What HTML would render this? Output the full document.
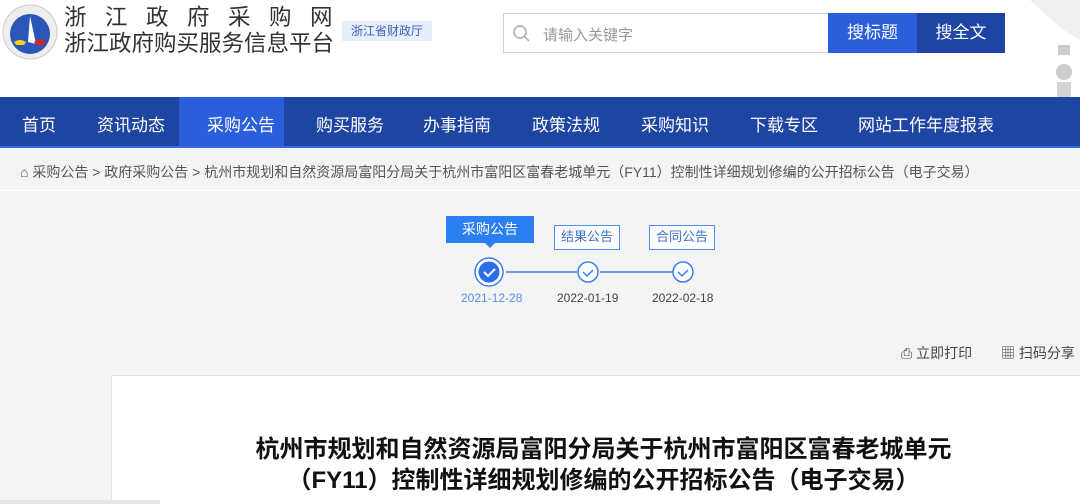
<!DOCTYPE html>
<html><head><meta charset="utf-8"><style>
*{margin:0;padding:0;box-sizing:border-box}
body{width:1080px;height:504px;overflow:hidden;background:#f4f4f4;font-family:"Liberation Sans","Noto Sans CJK SC",sans-serif;position:relative}
.hdr{position:absolute;left:0;top:0;width:1080px;height:97px;background:#fff}
.abs{position:absolute;white-space:nowrap}
.nav{position:absolute;left:0;top:97px;width:1080px;height:51px;background:#1f45a3;border-bottom:2px solid #3a6ad8}
.nav span{position:absolute;top:14px;color:#fff;font-size:17px}
</style></head><body>
<div class="hdr">
<svg class="abs" style="left:2px;top:4px" width="56" height="56" viewBox="0 0 56 56"><circle cx="28" cy="28" r="27" fill="#eee" stroke="#ccc"/><circle cx="28" cy="30" r="20" fill="#2a56b8"/><path d="M28 12 L34 40 L26 38Z" fill="#fff"/><path d="M12 38 q6-4 12 0 l-2 3 h-8z" fill="#f2d11a"/><path d="M32 38 q6-5 12 0 l-2 3 h-8z" fill="#d8202a"/></svg>
<div class="abs" style="left:64px;top:4px;font-size:22.5px;letter-spacing:18.5px;color:#333;line-height:28px">浙江政府采购网</div>
<div class="abs" style="left:64px;top:30px;font-size:22.5px;color:#333;line-height:28px">浙江政府购买服务信息平台</div>
<div class="abs" style="left:342px;top:21px;width:90px;height:20px;background:#e6eefb;color:#3d5fb8;font-size:12px;text-align:center;line-height:20px">浙江省财政厅</div>
<div class="abs" style="left:503px;top:13px;width:326px;height:40px;border:1px solid #c8d2e8;background:#fff"></div>
<svg class="abs" style="left:512px;top:24px" width="20" height="20" viewBox="0 0 20 20"><circle cx="8" cy="8" r="6" fill="none" stroke="#aaa" stroke-width="1.5"/><path d="M12.5 12.5 L17 17" stroke="#aaa" stroke-width="1.5"/></svg>
<div class="abs" style="left:543px;top:24px;font-size:15px;color:#999">请输入关键字</div>
<div class="abs" style="left:828px;top:13px;width:89px;height:40px;background:#2a5fd9;color:#fff;font-size:17px;text-align:center;line-height:40px">搜标题</div>
<div class="abs" style="left:917px;top:13px;width:88px;height:40px;background:#1e44a4;color:#fff;font-size:17px;text-align:center;line-height:40px">搜全文</div>
<svg class="abs" style="left:1000px;top:0" width="80" height="97"><path d="M30 0 Q60 30 80 40 V0z" fill="#f0f0f0"/><rect x="58" y="45" width="12" height="10" fill="#ccc"/><circle cx="64" cy="72" r="8" fill="#ccc"/><rect x="57" y="82" width="14" height="15" fill="#d4d4d4"/></svg>
</div>
<div class="nav">
<div class="abs" style="left:179px;top:0;width:105px;height:49px;background:#2b5edb"></div>
<span style="left:22px">首页</span><span style="left:97px">资讯动态</span><span style="left:207px">采购公告</span><span style="left:316px">购买服务</span><span style="left:423px">办事指南</span><span style="left:532px">政策法规</span><span style="left:641px">采购知识</span><span style="left:750px">下载专区</span><span style="left:858px">网站工作年度报表</span>
</div>
<div class="abs" style="left:20px;top:162px;font-size:14px;color:#555">⌂ 采购公告 &gt; 政府采购公告 &gt; 杭州市规划和自然资源局富阳分局关于杭州市富阳区富春老城单元（FY11）控制性详细规划修编的公开招标公告（电子交易）</div>
<div class="abs" style="left:0;top:190px;width:1080px;height:1px;background:#fff"></div>
<div class="abs" style="left:446px;top:216px;width:88px;height:27px;background:#2b7ff0;color:#fff;font-size:14px;text-align:center;line-height:27px">采购公告</div>
<div class="abs" style="left:484px;top:242px;border:6px solid transparent;border-top-color:#2b7ff0;border-bottom:0"></div>
<div class="abs" style="left:554px;top:225px;width:66px;height:25px;border:1.5px solid #4d8ef0;background:#fff;color:#4070c8;font-size:13px;text-align:center;line-height:22px">结果公告</div>
<div class="abs" style="left:649px;top:225px;width:66px;height:25px;border:1.5px solid #4d8ef0;background:#fff;color:#4070c8;font-size:13px;text-align:center;line-height:22px">合同公告</div>
<svg class="abs" style="left:470px;top:255px" width="230" height="36"><line x1="36" y1="17" x2="107" y2="17" stroke="#3b7ef0" stroke-width="1.5"/><line x1="130" y1="17" x2="203" y2="17" stroke="#3b7ef0" stroke-width="1.5"/><circle cx="19" cy="17" r="14" fill="#fff" stroke="#3b7ef0" stroke-width="1.5"/><circle cx="19" cy="17" r="10.5" fill="#2b6ee8"/><path d="M14 17l4 4 7-7" fill="none" stroke="#fff" stroke-width="2"/><circle cx="118" cy="17" r="10" fill="#fff" stroke="#3b7ef0" stroke-width="1.5"/><path d="M113 17l4 4 6-6" fill="none" stroke="#3b7ef0" stroke-width="1.5"/><circle cx="213" cy="17" r="10" fill="#fff" stroke="#3b7ef0" stroke-width="1.5"/><path d="M208 17l4 4 6-6" fill="none" stroke="#3b7ef0" stroke-width="1.5"/></svg>
<div class="abs" style="left:461px;top:291px;font-size:12px;color:#5b8ee8">2021-12-28</div>
<div class="abs" style="left:557px;top:291px;font-size:12px;color:#444">2022-01-19</div>
<div class="abs" style="left:652px;top:291px;font-size:12px;color:#444">2022-02-18</div>
<div class="abs" style="left:901px;top:343px;font-size:14px;color:#444">⎙ 立即打印</div>
<div class="abs" style="left:1001px;top:343px;font-size:14px;color:#444">▦ 扫码分享</div>
<div class="abs" style="left:111px;top:375px;width:969px;height:129px;background:#fff;border-left:1px solid #e2e2e2;border-top:1px solid #e2e2e2"></div>
<div class="abs" style="left:111px;top:434px;width:985px;text-align:center;font-size:24px;font-weight:bold;color:#111;line-height:31px">杭州市规划和自然资源局富阳分局关于杭州市富阳区富春老城单元<br>（FY11）控制性详细规划修编的公开招标公告（电子交易）</div>
<div class="abs" style="left:0;top:500px;width:160px;height:4px;background:#e6e6e6"></div>
</body></html>
